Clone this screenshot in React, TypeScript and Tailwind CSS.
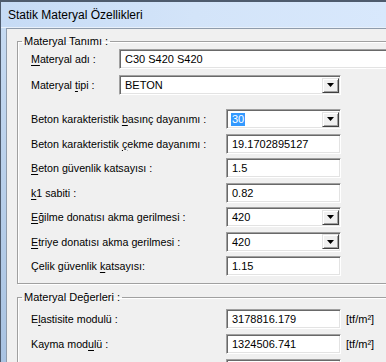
import React from 'react';

const font = { fontFamily: '"Liberation Sans", Arial, sans-serif' };

const Label = ({ text, u, className = '' }: { text: string; u: number; className?: string }) => (
  <span className={`text-[10.7px] leading-[14px] text-black whitespace-nowrap ${className}`}>
    {text.slice(0, u)}
    <span className="underline underline-offset-[2px]">{text.charAt(u)}</span>
    {text.slice(u + 1)}
  </span>
);

const sunken =
  'h-[20px] border border-t-[#a0a0a0] border-l-[#a0a0a0] border-b-white border-r-white shadow-[inset_1px_1px_0_#696969,inset_-1px_-1px_0_#e3e3e3] bg-white flex items-center';

const TextBox = ({ value, w = 'w-[115px]' }: { value: string; w?: string }) => (
  <div className={`${sunken} ${w} shrink-0 pl-[5px] text-[11px] leading-[14px] text-black`}>{value}</div>
);

const DropBtn = () => (
  <div className="ml-auto mr-[1px] h-[15px] w-[17px] bg-[#f0f0f0] border border-t-[#e3e3e3] border-l-[#e3e3e3] border-b-[#404040] border-r-[#404040] shadow-[inset_1px_1px_0_#fff,inset_-1px_-1px_0_#a0a0a0] flex items-center justify-center">
    <svg width="7" height="4" viewBox="0 0 7 4">
      <path d="M0 0h7L3.5 4z" fill="#000" />
    </svg>
  </div>
);

const Combo = ({ value, w = 'w-[115px]', selected = false }: { value: string; w?: string; selected?: boolean }) => (
  <div className={`${sunken} ${w} shrink-0 text-[11px] leading-[14px]`}>
    {selected ? (
      <span className="ml-[4px] px-[1px] leading-[13px] bg-[#3399ff] text-white">{value}</span>
    ) : (
      <span className="ml-[5px] text-black">{value}</span>
    )}
    <DropBtn />
  </div>
);

const Row = ({ text, u, children, lw = 'w-[195px]' }: { text: string; u: number; children: React.ReactNode; lw?: string }) => (
  <div className="flex items-center text-[11px] leading-[14px]">
    <div className={`${lw} shrink-0 flex`}>
      <Label text={text} u={u} />
    </div>
    {children}
  </div>
);

const Unit = () => <span className="ml-[5px] text-[11px] leading-[14px] text-black">[tf/m²]</span>;

export default function App() {
  return (
    <div
      className="w-[386px] h-[362px] overflow-hidden flex flex-col bg-gradient-to-b from-[#c8dcf3] to-[#a9c3e2] border-l border-t-2 border-[#4e5b6d]"
      style={font}
    >
      <div className="h-[26px] shrink-0 flex items-center pl-[7px] pt-[1px] bg-gradient-to-r from-[#c6dbf5] via-[#d3e4f9] to-[#d8e8fc] border-b border-[#e8f0fa]">
        <span className="text-[12px] leading-[16px] text-black">Statik Materyal Özellikleri</span>
      </div>
      <div className="flex-1 ml-[5px] w-[440px] border-l border-t border-[#8f9cac] bg-[#f0f0f0] pl-[10px] pt-[5px] text-[11px] leading-[14px]">
        <fieldset className="w-[420px] border border-[#a0a0a0] shadow-[inset_1px_1px_0_#fff,1px_1px_0_#fff] px-0 pb-[7px]">
          <legend className="ml-[4px] px-[2px] text-[11px] leading-[14px] text-black">Materyal Tanımı :</legend>
          <div className="pl-[13px] pt-[1px] flex flex-col">
            <Row text="Materyal adı :" u={0} lw="w-[88px]">
              <TextBox value="C30 S420 S420" w="w-[300px]" />
            </Row>
            <div className="mt-[6px]">
              <Row text="Materyal tipi :" u={9} lw="w-[88px]">
                <Combo value="BETON" w="w-[222px]" />
              </Row>
            </div>
            <div className="mt-[14px] flex flex-col gap-[4.5px]">
              <Row text="Beton karakteristik basınç dayanımı :" u={20}>
                <Combo value="30" selected />
              </Row>
              <Row text="Beton karakteristik çekme dayanımı :" u={20}>
                <TextBox value="19.1702895127" />
              </Row>
              <Row text="Beton güvenlik katsayısı :" u={0}>
                <TextBox value="1.5" />
              </Row>
              <Row text="k1 sabiti :" u={0}>
                <TextBox value="0.82" />
              </Row>
              <Row text="Eğilme donatısı akma gerilmesi :" u={0}>
                <Combo value="420" />
              </Row>
              <Row text="Etriye donatısı akma gerilmesi :" u={0}>
                <Combo value="420" />
              </Row>
              <Row text="Çelik güvenlik katsayısı:" u={15}>
                <TextBox value="1.15" />
              </Row>
            </div>
          </div>
        </fieldset>
        <fieldset className="mt-[6px] w-[420px] border border-[#a0a0a0] shadow-[inset_1px_1px_0_#fff,1px_1px_0_#fff] px-0 pb-[7px]">
          <legend className="ml-[4px] px-[2px] text-[11px] leading-[14px] text-black">Materyal Değerleri :</legend>
          <div className="pl-[13px] pt-[5px] flex flex-col gap-[5px]">
            <Row text="Elastisite modulü :" u={1}>
              <TextBox value="3178816.179" />
              <Unit />
            </Row>
            <Row text="Kayma modulü :" u={9}>
              <TextBox value="1324506.741" />
              <Unit />
            </Row>
            <div className="ml-[195px]">
              <TextBox value="" />
            </div>
          </div>
        </fieldset>
      </div>
    </div>
  );
}
